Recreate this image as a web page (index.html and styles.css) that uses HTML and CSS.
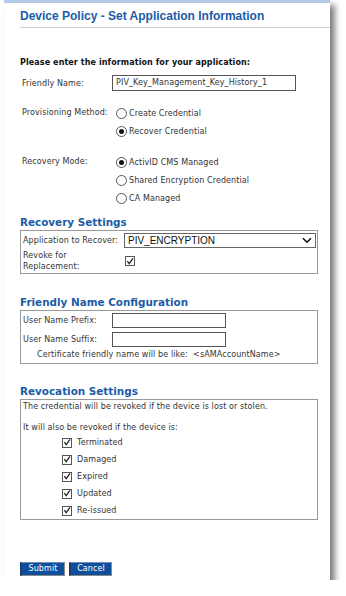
FILE: index.html
```html
<!DOCTYPE html>
<html>
<head>
<meta charset="utf-8">
<link rel="stylesheet" href="styles.css">
</head>
<body>
<div class="card">
  <div class="title">Device Policy - Set Application Information</div>
  <div class="content">
    <div class="intro">Please enter the information for your application:</div>

    <div class="row friendly">
      <div class="lbl">Friendly Name:</div>
      <div class="input wide">PIV_Key_Management_Key_History_1</div>
    </div>

    <div class="row group prov">
      <div class="lbl">Provisioning Method:</div>
      <div class="opts">
        <div class="opt"><span class="radio"></span>Create Credential</div>
        <div class="opt"><span class="radio on"></span>Recover Credential</div>
      </div>
    </div>

    <div class="row group mode">
      <div class="lbl">Recovery Mode:</div>
      <div class="opts">
        <div class="opt"><span class="radio on"></span>ActivID CMS Managed</div>
        <div class="opt"><span class="radio"></span>Shared Encryption Credential</div>
        <div class="opt"><span class="radio"></span>CA Managed</div>
      </div>
    </div>

    <div class="heading h-rec">Recovery Settings</div>
    <div class="box rec">
      <div class="rec-row">
        <div class="rlbl">Application to Recover:</div>
        <div class="select"><span>PIV_ENCRYPTION</span>
          <svg class="chev" width="10" height="7" viewBox="0 0 10 7"><path d="M1 1.2 L5 5.2 L9 1.2" fill="none" stroke="#111" stroke-width="1.6"/></svg>
        </div>
      </div>
      <div class="rec-row two">
        <div class="rlbl">Revoke for<br>Replacement:</div>
        <span class="check"><svg width="9" height="9" viewBox="0 0 9 9"><path d="M1.5 4.2 L3.6 7 L7.8 1" fill="none" stroke="#222" stroke-width="1.4"/></svg></span>
      </div>
    </div>

    <div class="heading h-fn">Friendly Name Configuration</div>
    <div class="box fn">
      <div class="fn-row">
        <div class="flbl">User Name Prefix:</div>
        <div class="input short"></div>
      </div>
      <div class="fn-row">
        <div class="flbl">User Name Suffix:</div>
        <div class="input short"></div>
      </div>
      <div class="fn-note">Certificate friendly name will be like:&nbsp; &lt;sAMAccountName&gt;</div>
    </div>

    <div class="heading h-rev">Revocation Settings</div>
    <div class="box rev">
      <div class="rev-text">The credential will be revoked if the device is lost or stolen.</div>
      <div class="rev-text second">It will also be revoked if the device is:</div>
      <div class="checks">
        <div class="citem"><span class="check"><svg width="9" height="9" viewBox="0 0 9 9"><path d="M1.5 4.2 L3.6 7 L7.8 1" fill="none" stroke="#222" stroke-width="1.4"/></svg></span>Terminated</div>
        <div class="citem"><span class="check"><svg width="9" height="9" viewBox="0 0 9 9"><path d="M1.5 4.2 L3.6 7 L7.8 1" fill="none" stroke="#222" stroke-width="1.4"/></svg></span>Damaged</div>
        <div class="citem"><span class="check"><svg width="9" height="9" viewBox="0 0 9 9"><path d="M1.5 4.2 L3.6 7 L7.8 1" fill="none" stroke="#222" stroke-width="1.4"/></svg></span>Expired</div>
        <div class="citem"><span class="check"><svg width="9" height="9" viewBox="0 0 9 9"><path d="M1.5 4.2 L3.6 7 L7.8 1" fill="none" stroke="#222" stroke-width="1.4"/></svg></span>Updated</div>
        <div class="citem"><span class="check"><svg width="9" height="9" viewBox="0 0 9 9"><path d="M1.5 4.2 L3.6 7 L7.8 1" fill="none" stroke="#222" stroke-width="1.4"/></svg></span>Re-issued</div>
      </div>
    </div>

    <div class="buttons">
      <div class="btn submit">Submit</div>
      <div class="btn cancel">Cancel</div>
    </div>
  </div>
</div>
</body>
</html>
```
FILE: styles.css
```css
html, body {
  margin: 0;
  padding: 0;
  background: #fff;
}
body {
  font-family: "DejaVu Sans", Verdana, sans-serif;
  font-size: 8px;
  letter-spacing: 0.1px;
  color: #333;
}
.card {
  margin-left: 4px;
  width: 326px;
  height: 580px;
  box-sizing: border-box;
  background: #fff;
  border-top: 3px solid #b3cbe9;
  box-shadow: 5px 5px 6px rgba(0, 0, 0, 0.5);
  display: flex;
  flex-direction: column;
}
.title {
  margin-left: 16px;
  height: 24px;
  line-height: 26px;
  border-bottom: 1px solid #cfcfcf;
  font-family: "Liberation Sans", Arial, sans-serif;
  font-weight: bold;
  font-size: 12px;
  letter-spacing: 0;
  color: #1b5ca6;
  white-space: nowrap;
}
.content {
  padding-left: 16px;
  display: flex;
  flex-direction: column;
}
.intro {
  margin-top: 30px;
  font-weight: bold;
  line-height: 10px;
  color: #111;
}
.row {
  display: flex;
  align-items: flex-start;
}
.lbl {
  width: 90px;
  padding-left: 2px;
  flex-shrink: 0;
}
.friendly {
  margin-top: 7px;
  align-items: center;
}
.input {
  box-sizing: border-box;
  border: 1px solid #555;
  background: #fff;
  height: 16px;
  line-height: 14px;
  padding-left: 3px;
  color: #333;
}
.input.wide { width: 184px; }
.input.short { width: 114px; height: 15px; }
.group .lbl { line-height: 18px; }
.prov { margin-top: 13px; }
.mode { margin-top: 13px; }
.opts {
  display: flex;
  flex-direction: column;
  margin-left: 4px;
}
.opt {
  display: flex;
  align-items: center;
  height: 18px;
}
.radio {
  box-sizing: border-box;
  width: 11px;
  height: 11px;
  border: 1px solid #555;
  border-radius: 50%;
  margin-right: 2px;
  position: relative;
  flex-shrink: 0;
}
.radio.on::after {
  content: "";
  position: absolute;
  left: 2px;
  top: 2px;
  width: 5px;
  height: 5px;
  border-radius: 50%;
  background: #111;
}
.heading {
  font-weight: bold;
  font-size: 10.4px;
  letter-spacing: 0;
  line-height: 13px;
  color: #1b5ca6;
}
.h-rec { margin-top: 9px; }
.box {
  box-sizing: border-box;
  width: 298px;
  border: 1px solid #999;
  margin-top: 1px;
}
.rec {
  height: 44px;
  padding: 2px 1px 0 2px;
}
.rec-row {
  display: flex;
  align-items: center;
}
.rlbl {
  width: 101px;
  flex-shrink: 0;
  line-height: 11px;
}
.rec-row.two {
  margin-top: 2px;
}
.select {
  box-sizing: border-box;
  width: 192px;
  height: 15px;
  border: 1px solid #666;
  display: flex;
  align-items: center;
  justify-content: space-between;
  padding: 0 3px 0 3px;
  font-family: "Liberation Sans", Arial, sans-serif;
  font-size: 10px;
  letter-spacing: 0;
  color: #111;
}
.check {
  box-sizing: border-box;
  width: 10px;
  height: 10px;
  border: 1px solid #555;
  display: inline-flex;
  align-items: center;
  justify-content: center;
  flex-shrink: 0;
  background: #fff;
}
.check svg { display: block; }
.rec .check { margin-left: 1px; }
.h-fn { margin-top: 22px; }
.fn {
  height: 54px;
  padding: 2px 0 0 2px;
}
.fn-row {
  display: flex;
  align-items: center;
  height: 15px;
  margin-bottom: 4px;
}
.flbl {
  width: 89px;
  flex-shrink: 0;
}
.fn-note {
  padding-left: 14px;
  line-height: 10px;
  margin-top: -1px;
}
.h-rev { margin-top: 21px; }
.rev {
  height: 121px;
  padding: 2px 0 0 2px;
}
.rev-text {
  line-height: 10px;
}
.rev-text.second { margin-top: 11px; }
.checks {
  display: flex;
  flex-direction: column;
  padding-left: 39px;
  margin-top: 1px;
}
.citem {
  display: flex;
  align-items: center;
  height: 17px;
}
.citem .check { margin-right: 5px; }
.buttons {
  display: flex;
  gap: 4px;
  margin-top: 42px;
}
.btn {
  box-sizing: border-box;
  height: 14px;
  line-height: 12px;
  background: #0d4f9a;
  color: #fff;
  text-align: center;
  border: 1px solid #6f8fb8;
  border-right-color: #8a8a8a;
  border-bottom-color: #8a8a8a;
  border-left: 2px solid #1a3d6e;
}
.submit { width: 45px; }
.cancel { width: 43px; }
```
